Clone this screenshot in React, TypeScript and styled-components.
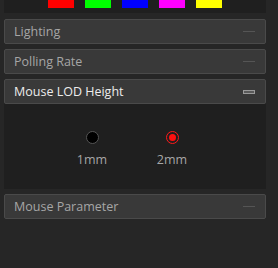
import styled, { createGlobalStyle } from 'styled-components';

const Global = createGlobalStyle`
  html, body {
    margin: 0;
    padding: 0;
    background: #262626;
    font-family: 'Open Sans', 'Liberation Sans', sans-serif;
  }
`;

const Column = styled.div`
  width: 262px;
  margin-left: 4px;
  display: flex;
  flex-direction: column;
`;

const SwatchBar = styled.div`
  background: #1f1f1f;
  height: 13px;
  display: flex;
  gap: 11px;
  padding-left: 44px;
  margin-bottom: 6px;
`;

const Swatch = styled.div<{ $color: string }>`
  width: 26px;
  height: 8px;
  background: ${(p) => p.$color};
`;

const Section = styled.div<{ $gap: number }>`
  margin-bottom: ${(p) => p.$gap}px;
`;

const Header = styled.div<{ $open?: boolean }>`
  height: 23px;
  border: 1px solid #4a4a4a;
  border-radius: 2px;
  background: #393939;
  display: flex;
  align-items: center;
  justify-content: space-between;
  padding: 0 10px 0 9px;
  color: ${(p) => (p.$open ? '#ececec' : '#a6a6a6')};
  font-size: 12.5px;
`;

const Dash = styled.div`
  width: 12px;
  height: 1px;
  background: #555;
`;

const OpenIcon = styled.div`
  width: 10px;
  height: 2px;
  border: 1px solid #9a9a9a;
  background: #5a5a5a;
`;

const Body = styled.div`
  background: #1f1f1f;
  height: 85px;
  display: flex;
  justify-content: center;
  gap: 50px;
  padding-top: 27px;
  box-sizing: border-box;
  padding-right: 6px;
`;

const Option = styled.label`
  display: flex;
  flex-direction: column;
  align-items: center;
  gap: 7px;
  color: #a6a6a6;
  font-size: 12.5px;
  width: 30px;
`;

const Radio = styled.span<{ $checked?: boolean }>`
  width: 13px;
  height: 13px;
  border-radius: 50%;
  box-sizing: border-box;
  border: ${(p) => (p.$checked ? '1.5px solid #ff1a1a' : '1px solid #555')};
  background: ${(p) => (p.$checked ? '#1f1f1f' : '#000')};
  display: flex;
  align-items: center;
  justify-content: center;
  &::after {
    content: '';
    display: ${(p) => (p.$checked ? 'block' : 'none')};
    width: 7px;
    height: 7px;
    border-radius: 50%;
    background: #ff1010;
  }
`;

const colors = ['#ff0000', '#00ff00', '#0000ff', '#ff00ff', '#ffff00'];

export default function App() {
  return (
    <>
      <Global />
      <Column>
        <SwatchBar>
          {colors.map((c) => (
            <Swatch key={c} $color={c} />
          ))}
        </SwatchBar>
        <Section $gap={5}>
          <Header>
            Lighting
            <Dash />
          </Header>
        </Section>
        <Section $gap={5}>
          <Header>
            Polling Rate
            <Dash />
          </Header>
        </Section>
        <Section $gap={5}>
          <Header $open>
            Mouse LOD Height
            <OpenIcon />
          </Header>
          <Body>
            <Option>
              <Radio />
              1mm
            </Option>
            <Option>
              <Radio $checked />
              2mm
            </Option>
          </Body>
        </Section>
        <Section $gap={0}>
          <Header>
            Mouse Parameter
            <Dash />
          </Header>
        </Section>
      </Column>
    </>
  );
}
